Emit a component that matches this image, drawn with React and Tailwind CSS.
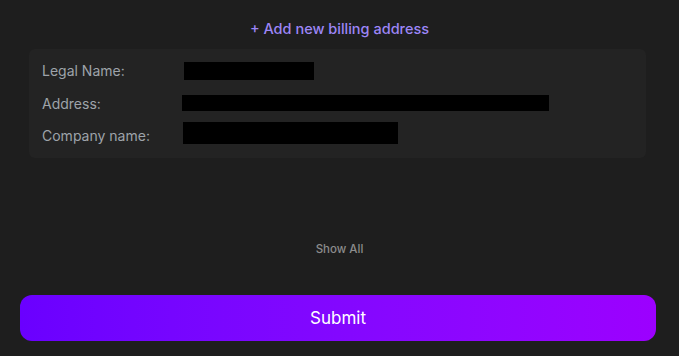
import React from 'react';

const rows = [
  { label: 'Legal Name:', bar: 'ml-[184px] w-[130px] h-[18px]', lab: '' },
  { label: 'Address:', bar: 'ml-[182px] w-[367px] h-[16px]', lab: 'translate-y-[0.5px]' },
  { label: 'Company name:', bar: 'ml-[183px] w-[215px] h-[22px]', lab: 'translate-y-[3px]' },
];

const App = () => {
  return (
    <div className="w-[679px] h-[356px] bg-[#1e1e1e] font-['Inter','Liberation_Sans',sans-serif] flex flex-col">
      {/* Add new address link */}
      <div className="pt-[20px] h-[49px] text-center">
        <button className="text-[14.5px] leading-[18px] font-medium text-[#9d86f7] block mx-auto">+ Add new billing address</button>
      </div>

      {/* Billing address card */}
      <div className="mx-[29px] w-[617px] h-[109px] rounded-[6px] bg-[#232323] pt-[13px]">
        {rows.map((r, i) => (
          <div key={i} className={`relative flex items-center ${i === 0 ? 'h-[18px]' : i === 1 ? 'h-[16px] mt-[15px]' : 'h-[22px] mt-[11px]'}`}>
            <span className={`absolute left-[13px] text-[14px] leading-[18px] text-[#9ea3aa] ${r.lab}`}>{r.label}</span>
            <div className={`bg-black ${r.bar} -translate-x-[29px]`}></div>
          </div>
        ))}
      </div>

      {/* Show all */}
      <div className="mt-[83px] text-center">
        <button className="text-[11.5px] leading-[16px] font-medium text-[#8c8c8c] block mx-auto">Show All</button>
      </div>

      {/* Submit */}
      <div className="mt-[38px] px-[20px]">
        <button className="block w-[636px] h-[46px] rounded-[12px] bg-gradient-to-r from-[#6a00ff] to-[#9c00ff] text-white text-[17px] leading-[22px]">
          Submit
        </button>
      </div>
    </div>
  );
};

export default App;
